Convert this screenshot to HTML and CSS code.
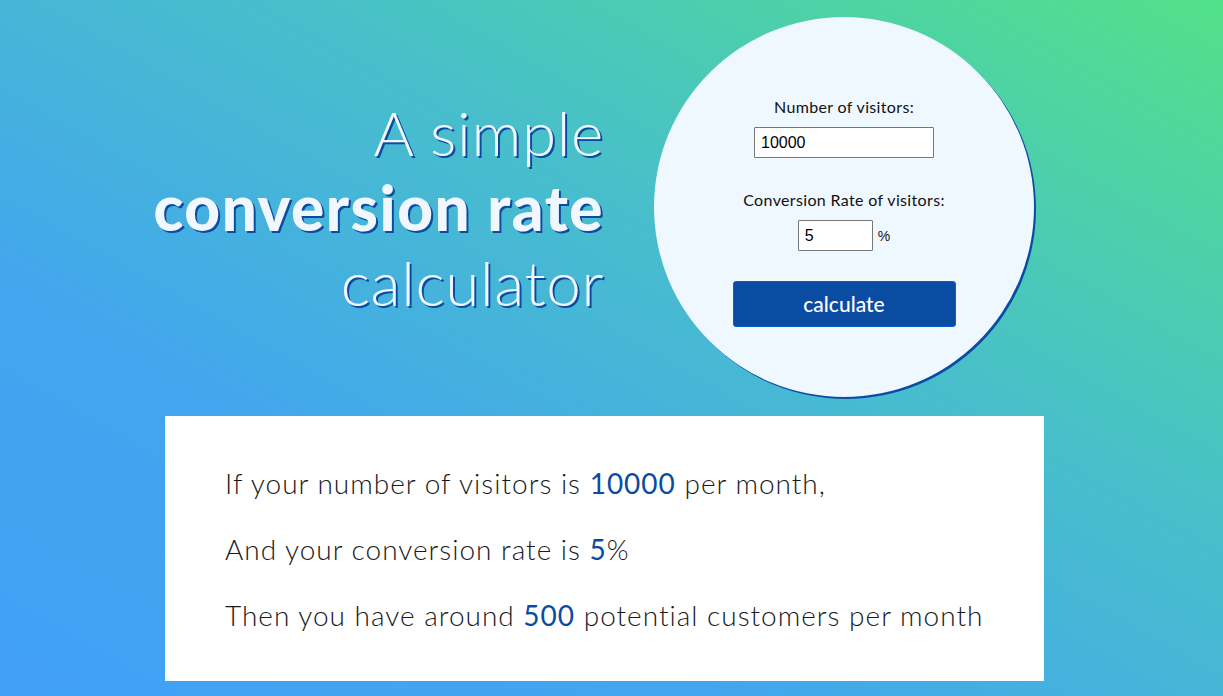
FILE: index.html
```html
<!DOCTYPE html>
<html lang="en">
<head>
<meta charset="utf-8">
<title>Conversion rate calculator</title>
<link rel="stylesheet" href="styles.css">
</head>
<body>
<div class="page">
  <section class="top">
    <h1 class="title">
      <span class="light">A simple</span>
      <span class="bold">conversion rate</span>
      <span class="light">calculator</span>
    </h1>
    <form class="circle">
      <label class="label" for="visitors">Number of visitors:</label>
      <input class="input wide" id="visitors" type="text" value="10000">
      <label class="label second" for="rate">Conversion Rate of visitors:</label>
      <div class="rate-row">
        <input class="input narrow" id="rate" type="text" value="5">
        <span class="pct">%</span>
      </div>
      <button class="btn" type="button">calculate</button>
    </form>
  </section>
  <section class="result">
    <p>If your number of visitors is <span class="num">10000</span> per month,</p>
    <p>And your conversion rate is <span class="num">5</span>%</p>
    <p>Then you have around <span class="num">500</span> potential customers per month</p>
  </section>
</div>
</body>
</html>
```
FILE: styles.css
```css
html, body {
  margin: 0;
  padding: 0;
}
body {
  min-height: 696px;
  background: linear-gradient(to top right, #41a0f6 0%, #42a6ee 30%, #48bfca 62%, #52e189 100%);
  font-family: Lato, "Open Sans", sans-serif;
  overflow: hidden;
}
.page {
  width: 879px;
  margin-left: 165px;
  padding-top: 17px;
}
.top {
  display: flex;
  align-items: center;
  height: 380px;
}
.title {
  width: 439px;
  margin: 0 50px 0 0;
  display: flex;
  flex-direction: column;
  align-items: flex-end;
  text-align: right;
  font-size: 62px;
  line-height: 75px;
  color: #f0f7ff;
  text-shadow: 2px 2px 0 #0b4ca3;
  white-space: nowrap;
}
.title .light {
  font-weight: 300;
  letter-spacing: 0.6px;
}
.title .bold {
  font-weight: 900;
  letter-spacing: 1.5px;
}
.circle {
  width: 380px;
  height: 380px;
  border-radius: 50%;
  background: #eff7ff;
  box-shadow: 2px 2px 0 #0b4ca3;
  display: flex;
  flex-direction: column;
  align-items: center;
  box-sizing: border-box;
  padding-top: 81px;
  margin: 0;
}
.label {
  font-size: 16px;
  letter-spacing: 0.35px;
  color: #111;
  line-height: 18px;
}
.label.second {
  margin-top: 33px;
}
.input {
  font-family: "Liberation Sans", Arial, sans-serif;
  font-size: 16px;
  height: 31px;
  box-sizing: border-box;
  border: 1px solid #777;
  border-radius: 1px;
  background: #fff;
  padding: 1px 6px;
  color: #000;
  margin-top: 11px;
}
.input.wide {
  width: 180px;
}
.rate-row {
  display: flex;
  align-items: center;
  margin-top: 11px;
}
.input.narrow {
  width: 75px;
  margin-top: 0;
}
.pct {
  font-family: "Liberation Sans", Arial, sans-serif;
  font-size: 14px;
  margin-left: 5px;
  color: #111;
}
.btn {
  margin-top: 30px;
  width: 223px;
  height: 46px;
  background: #0a4ca1;
  border: 1px solid #0d5dcc;
  border-radius: 3px;
  color: #fff;
  font-family: Lato, "Open Sans", sans-serif;
  font-size: 21px;
  font-weight: 500;
  padding: 0 0 2px;
}
.result {
  margin-top: 19px;
  background: #fff;
  height: 265px;
  box-sizing: border-box;
  padding: 34px 0 0 60px;
}
.result p {
  margin: 0;
  font-size: 28px;
  line-height: 66px;
  letter-spacing: 1px;
  font-weight: 300;
  color: #1a1a1a;
}
.num {
  color: #0a4ca1;
  font-weight: 400;
}
```
